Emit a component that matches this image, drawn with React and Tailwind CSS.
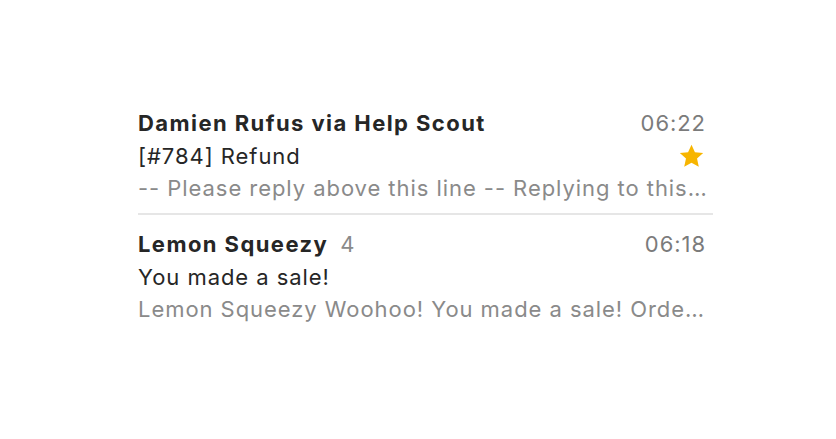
import React from 'react';

const messages = [
  {
    sender: 'Damien Rufus via Help Scout',
    time: '06:22',
    subject: '[#784] Refund',
    preview: '-- Please reply above this line -- Replying to this…',
    starred: true,
  },
  {
    sender: 'Lemon Squeezy',
    count: 4,
    time: '06:18',
    subject: 'You made a sale!',
    preview: 'Lemon Squeezy Woohoo! You made a sale! Orde…',
  },
];

const Star = () => (
  <svg width="25" height="24" viewBox="0 0 24 23" className="mr-[2px] block">
    <path
      d="M12 0.6l3.3 7.2 7.9.9-5.9 5.3 1.7 7.8L12 17.9l-7 3.9 1.7-7.8L.8 8.7l7.9-.9z"
      fill="#f7b500"
    />
  </svg>
);

const Row = ({ m, first }) => (
  <div className={first ? 'pt-[11px] pb-[9px] border-b-2 border-[#e6e6e6]' : 'pt-[13px]'}>
    <div className="pr-[7px] leading-[32px]">
      <div className="flex items-center justify-between">
        <div className="flex items-baseline gap-[12px] min-w-0">
          <span className="whitespace-nowrap font-bold tracking-[0.065em] text-[#262626]">{m.sender}</span>
          {m.count && <span className="text-[#8a8a8a]">{m.count}</span>}
        </div>
        <span className="shrink-0 text-[#7b7b7b]">{m.time}</span>
      </div>
      <div className="flex h-[33px] items-center justify-between">
        <span className="whitespace-nowrap text-[#262626]">{m.subject}</span>
        {m.starred && <Star />}
      </div>
      <div className="whitespace-nowrap leading-[32px] text-[#8a8a8a]">{m.preview}</div>
    </div>
  </div>
);

export default function App() {
  return (
    <div
      className="w-[836px] h-[439px] bg-white"
      style={{ fontFamily: 'Inter, "Noto Sans", sans-serif' }}
    >
      <div className="ml-[138px] w-[575px] pt-[96px] text-[22px] tracking-[0.043em]">
        {messages.map((m, i) => (
          <Row key={i} m={m} first={i === 0} />
        ))}
      </div>
    </div>
  );
}
